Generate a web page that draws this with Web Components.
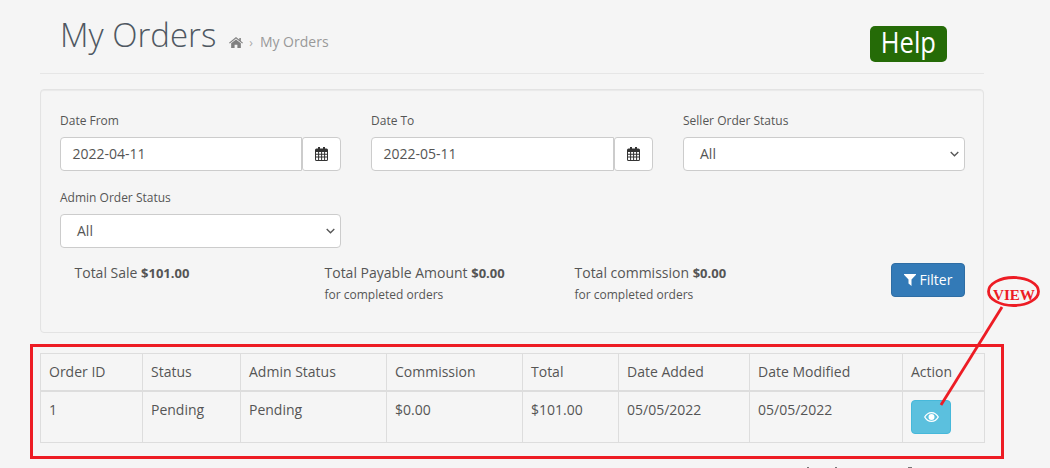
<!DOCTYPE html>
<html lang="en">
<head>
<meta charset="utf-8">
<title>My Orders</title>
<style>
  html, body { margin: 0; height: 468px; overflow: hidden; background: #f5f5f5; }
  body { font: 14px/20px "Open Sans", "Liberation Sans", sans-serif; color: #555; position: relative; }
</style>
</head>
<body>
<orders-page>
  <page-header title="My Orders"></page-header>
  <filter-panel></filter-panel>
  <orders-table></orders-table>
</orders-page>
<view-annotation></view-annotation>

<script>
const ICONS = {
  home: `<svg width="14" height="11" viewBox="0 0 13 11" preserveAspectRatio="none"><path fill="#808080" d="M6.500 0 9.600 2.700V1H11V3.900L13 5.700 12.300 6.400 6.500 1.400 .7 6.400 0 5.700ZM6.500 2.400 11 6.300V11H7.800V7.800H5.200V11H2V6.300Z"/></svg>`,
  calendar: `<svg width="13" height="14" viewBox="0 0 13 14"><path fill="#333" fill-rule="evenodd" d="M2 1.500h1V0h2v1.500h3V0h2v1.500h1.500A1.500 1.500 0 0 1 13 3v9.500A1.500 1.500 0 0 1 11.500 14h-10A1.500 1.500 0 0 1 0 12.500V3a1.500 1.500 0 0 1 1.500-1.500ZM1 5v1.700h2.100V5Zm3.100 0v1.700h2V5Zm3 0v1.700h2V5Zm3 0v1.700H12V5ZM1 7.700v1.700h2.100V7.700Zm3.100 0v1.700h2V7.700Zm3 0v1.700h2V7.700Zm3 0v1.700H12V7.700ZM1 10.400v2.100c0 .3.200.5.500.5h1.600v-2.600Zm3.100 0V13h2v-2.600Zm3 0V13h2v-2.600Zm3 0V13h1.400c.3 0 .5-.2.500-.5v-2.100Z"/></svg>`,
  chevron: `<svg width="9" height="6" viewBox="0 0 9 6"><path fill="none" stroke="#555" stroke-width="1.300" d="M.7 1 4.500 4.800 8.300 1"/></svg>`,
  filter: `<svg width="12" height="12" viewBox="0 0 12 12"><path fill="#fff" d="M0 0H12V.8L7.500 5.500V12L4.500 9.500V5.500L0 .8Z"/></svg>`,
  eye: `<svg width="15" height="10" viewBox="0 0 15 10"><path fill="#fff" fill-rule="evenodd" d="M7.500 0C10.700 0 13.500 2 15 5 13.500 8 10.700 10 7.500 10S1.500 8 0 5C1.500 2 4.300 0 7.500 0ZM7.500 1.200C5.300 1.200 3.300 2.100 1.400 5 3.300 7.900 5.300 8.800 7.500 8.800S11.700 7.900 13.600 5C11.700 2.100 9.700 1.200 7.500 1.200ZM7.500 2A3 3 0 1 1 7.500 8 3 3 0 0 1 7.500 2Z"/></svg>`
};

class OrdersPage extends HTMLElement {
  constructor() {
    super();
    this.attachShadow({mode: 'open'}).innerHTML = `
      <style>
        :host { display: block; padding: 0 66px 0 40px; }
      </style>
      <slot></slot>`;
  }
}

class PageHeader extends HTMLElement {
  constructor() {
    super();
    const title = this.getAttribute('title');
    this.attachShadow({mode: 'open'}).innerHTML = `
      <style>
        :host { display: flex; height: 73px; border-bottom: 1px solid #e6e6e6; padding-left: 20px; box-sizing: content-box; }
        h1 { margin: 13px 0 0; font-size: 33px; line-height: 44px; font-weight: 300; color: #4f5862; }
        .crumbs { display: flex; align-items: center; height: 20px; margin: 32px 0 0 13px; color: #999; }
        .crumbs svg { display: block; }
        .sep { font-size: 12px; margin: 1px 7px 0 6px; color: #aaa; }
        .help { margin: 26px 37px 0 auto; width: 77px; height: 36px; box-sizing: border-box; background: #256b07; color: #fff;
                border-radius: 5px; font-size: 29px; line-height: 32px; text-align: center; }
        .help span { display: inline-block; transform: scaleX(.88); }
      </style>
      <h1>${title}</h1>
      <div class="crumbs">${ICONS.home}<span class="sep">›</span><span>${title}</span></div>
      <div class="help"><span>Help</span></div>`;
  }
}

class FilterField extends HTMLElement {
  constructor() {
    super();
    this.attachShadow({mode: 'open'}).innerHTML = `
      <style>
        :host { display: block; }
        label { display: block; font-size: 12px; line-height: 17px; margin-bottom: 8px; }
        .box { display: flex; height: 34px; background: #fff; border: 1px solid #ccc; border-radius: 4px; box-sizing: border-box;
               align-items: center; color: #555; }
        .value { flex: 1; }
        .date .value { padding-left: 11.500px; }
        .select .value { padding-left: 16px; }
        .select svg { margin-right: 5px; }
        .group { display: flex; }
        .group .box { flex: 1; border-radius: 4px 0 0 4px; }
        .cal { width: 39px; height: 34px; box-sizing: border-box; display: flex; align-items: center; justify-content: center;
               background: #fff; border: 1px solid #ccc; border-radius: 3px 4px 4px 3px; }
      </style>
      <label>${this.getAttribute('label')}</label>
      ${this.hasAttribute('date')
        ? `<div class="group"><div class="box date"><span class="value">${this.getAttribute('date')}</span></div><div class="cal">${ICONS.calendar}</div></div>`
        : `<div class="box select"><span class="value">All</span>${ICONS.chevron}</div>`}`;
  }
}

class TotalStat extends HTMLElement {
  constructor() {
    super();
    const note = this.getAttribute('note');
    this.attachShadow({mode: 'open'}).innerHTML = `
      <style>
        :host { display: block; width: 250px; font-size: 14px; line-height: 20px; }
        b { font-size: 13px; }
        small { display: block; font-size: 12px; line-height: 23px; }
      </style>
      ${this.getAttribute('label')} <b>${this.getAttribute('amount')}</b>
      ${note ? `<small>${note}</small>` : ''}`;
  }
}

class FilterPanel extends HTMLElement {
  constructor() {
    super();
    this.attachShadow({mode: 'open'}).innerHTML = `
      <style>
        :host { display: block; margin-top: 15px; padding: 22px 18px 35px 19px; height: 244px; box-sizing: border-box; border: 1px solid #e3e3e3; border-radius: 4px;
                box-shadow: inset 0 1px 1px rgba(0,0,0,.05); }
        .fields { display: grid; grid-template-columns: 281px 282px 282px; column-gap: 30px; row-gap: 18px; }
        .totals { display: flex; margin-top: 15px; padding-left: 14.500px; }
        .filter { margin-left: auto; width: 74px; height: 34px; box-sizing: border-box; background: #337ab7; border: 1px solid #2e6da4; border-radius: 4px; color: #fff;
                  display: flex; align-items: center; justify-content: center; gap: 4px; }
      </style>
      <div class="fields">
        <filter-field label="Date From" date="2022-04-11"></filter-field>
        <filter-field label="Date To" date="2022-05-11"></filter-field>
        <filter-field label="Seller Order Status"></filter-field>
        <filter-field label="Admin Order Status"></filter-field>
      </div>
      <div class="totals">
        <total-stat label="Total Sale" amount="$101.00"></total-stat>
        <total-stat label="Total Payable Amount" amount="$0.00" note="for completed orders"></total-stat>
        <total-stat label="Total commission" amount="$0.00" note="for completed orders"></total-stat>
        <div class="filter">${ICONS.filter}<span>Filter</span></div>
      </div>`;
  }
}

class OrdersTable extends HTMLElement {
  constructor() {
    super();
    const cols = [['Order ID', 102, '1'], ['Status', 98, 'Pending'], ['Admin Status', 146, 'Pending'], ['Commission', 136, '$0.00'],
                  ['Total', 96, '$101.00'], ['Date Added', 131, '05/05/2022'], ['Date Modified', 153, '05/05/2022']];
    this.attachShadow({mode: 'open'}).innerHTML = `
      <style>
        :host { display: block; margin-top: 20px; }
        table { width: 944px; table-layout: fixed; border-collapse: collapse; }
        th, td { border: 1px solid #ddd; padding: 8px; text-align: left; vertical-align: top; font-weight: 400; }
        th { border-bottom-width: 2px; }
        .view { width: 40px; height: 34px; box-sizing: border-box; background: #5bc0de; border: 1px solid #46b8da; border-radius: 4px; display: flex; align-items: center; justify-content: center; }
      </style>
      <table>
        <colgroup>${cols.map(c => `<col style="width:${c[1]}px">`).join('')}<col style="width:82px"></colgroup>
        <thead><tr>${cols.map(c => `<th>${c[0]}</th>`).join('')}<th>Action</th></tr></thead>
        <tbody><tr>${cols.map(c => `<td>${c[2]}</td>`).join('')}<td><div class="view">${ICONS.eye}</div></td></tr></tbody>
      </table>`;
  }
}

// red markup drawn over the screenshot
class ViewAnnotation extends HTMLElement {
  constructor() {
    super();
    this.attachShadow({mode: 'open'}).innerHTML = `
      <style>
        :host { position: absolute; left: 0; top: 0; width: 1050px; height: 468px; pointer-events: none; }
        svg { display: block; }
        text { font: bold 15px "Liberation Serif", serif; fill: #ed1c24; }
      </style>
      <svg width="1050" height="468">
        <rect x="31.500" y="345.500" width="971" height="112" fill="none" stroke="#ed1c24" stroke-width="3"/>
        <line x1="1002" y1="307" x2="941" y2="405" stroke="#ed1c24" stroke-width="2.800"/>
        <ellipse cx="1013.500" cy="291.500" rx="25" ry="14" fill="#f5f5f5" stroke="#ed1c24" stroke-width="2.800"/>
        <text x="1014" y="300" text-anchor="middle" textLength="42" lengthAdjust="spacingAndGlyphs">VIEW</text>
        <g fill="#777"><rect x="807" y="467" width="2" height="1"/><rect x="835" y="467" width="2" height="1"/><rect x="908" y="467" width="4" height="1"/></g>
      </svg>`;
  }
}

customElements.define('orders-page', OrdersPage);
customElements.define('page-header', PageHeader);
customElements.define('filter-field', FilterField);
customElements.define('total-stat', TotalStat);
customElements.define('filter-panel', FilterPanel);
customElements.define('orders-table', OrdersTable);
customElements.define('view-annotation', ViewAnnotation);
</script>
</body>
</html>
